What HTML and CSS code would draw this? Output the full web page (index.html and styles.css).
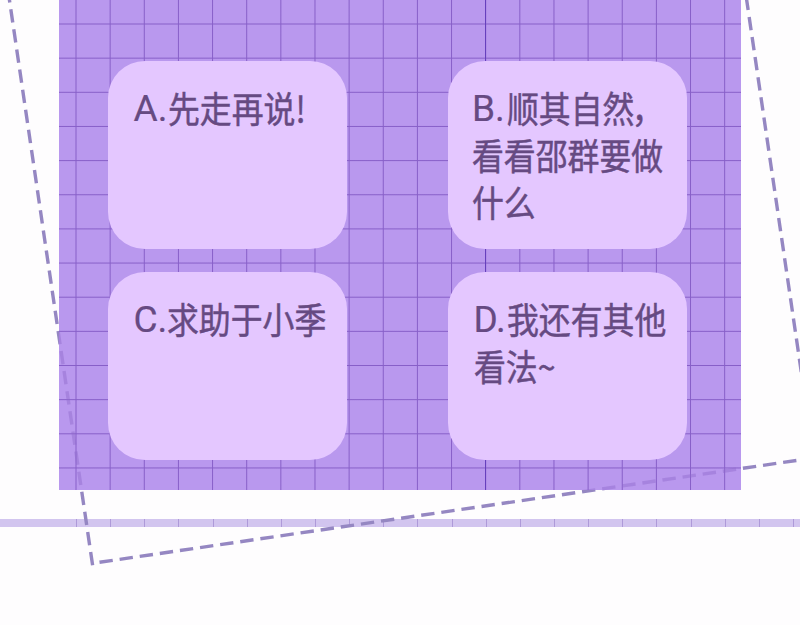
FILE: index.html
```
<!DOCTYPE html>
<html lang="zh-CN">
<head>
<meta charset="utf-8">
<title>选择题</title>
<link rel="stylesheet" href="styles.css">
</head>
<body>
<main class="page">
  <section class="board">
    <article class="card"><p class="line"><span class="key">A.</span><span class="words">先走再说!</span></p></article>
    <article class="card"><p class="line"><span class="key">B.</span><span class="words">顺其自<span class="tight">然</span>，</span></p><p class="line"><span class="words">看看邵群要做</span></p><p class="line"><span class="words">什么</span></p></article>
    <article class="card"><p class="line"><span class="key">C.</span><span class="words">求助于小季</span></p></article>
    <article class="card"><p class="line"><span class="key">D.</span><span class="words">我还有其他</span></p><p class="line"><span class="words">看法~</span></p></article>
  </section>
  <div class="strip"></div>
  <svg class="frame" viewBox="0 0 800 625" aria-hidden="true">
    <defs>
      <clipPath id="outside"><path clip-rule="evenodd" d="M0 0H800V625H0ZM59 0H741V490H59Z"/></clipPath>
      <clipPath id="inside"><path d="M59 0H741V490H59Z"/></clipPath>
      <g id="dashes">
        <path d="M92.6 565.3L6.5-20"/>
        <path d="M99.5 562.3L820 457"/>
        <path d="M746.2-3.2L805.7 402"/>
      </g>
    </defs>
    <use href="#dashes" class="dash" clip-path="url(#outside)"/>
    <use href="#dashes" class="dash faint" clip-path="url(#inside)"/>
  </svg>
</main>
</body>
</html>
```
FILE: styles.css
```
body {
  margin: 0;
  background: #fefdfe;
}

.page {
  position: relative;
  width: 800px;
  height: 625px;
  overflow: hidden;
}

.board {
  box-sizing: border-box;
  display: grid;
  grid-template-columns: 239px 239px;
  grid-template-rows: 188px 188px;
  column-gap: 101px;
  row-gap: 23.5px;
  width: 682px;
  height: 490px;
  margin-left: 59px;
  padding: 60.5px 0 0 49px;
  background:
    linear-gradient(#6640bd, #6640bd) 426px 0 / 1px 100% no-repeat,
    repeating-linear-gradient(90deg, transparent 0, #875fc8 1px, transparent 2px 34.14px) 16px 0 / 700px 100% no-repeat,
    repeating-linear-gradient(transparent 0, #875fc8 1px, transparent 2px 34.15px) 0 23px / 100% 500px no-repeat,
    #b998ee;
}

.card {
  box-sizing: border-box;
  padding: 25px 0 0 25.5px;
  border-radius: 37px;
  background: #e4c7ff;
}

.card:nth-child(2) {
  padding-left: 24px;
}

.line {
  display: flex;
  height: 47px;
  margin: 0;
  color: #664a82;
  font: 400 36px/47px "Noto Sans CJK SC", sans-serif;
  -webkit-text-stroke: 0.5px #664a82;
  white-space: nowrap;
}

.key {
  width: 34.5px;
  font: 37px/45px Roboto, sans-serif;
  -webkit-text-stroke: 0.2px #664a82;
}

.words {
  height: 43px;
  line-height: 43px;
  transform: scaleX(0.885);
  transform-origin: left;
}

.tight {
  letter-spacing: -3px;
}

.strip {
  height: 8px;
  margin-top: 28.5px;
  background:
    repeating-linear-gradient(90deg, #ae9ad9 0 1px, transparent 1px 34.14px) 75.5px 0 / 730px 100% no-repeat,
    #d2c5ef;
}

.frame {
  position: absolute;
  inset: 0;
  width: 800px;
  height: 625px;
}

.dash {
  fill: none;
  stroke: #9587c2;
  stroke-width: 3.4;
  stroke-dasharray: 13.4 6.92;
}

.faint {
  stroke: #906bcc;
  opacity: 0.45;
}
```
